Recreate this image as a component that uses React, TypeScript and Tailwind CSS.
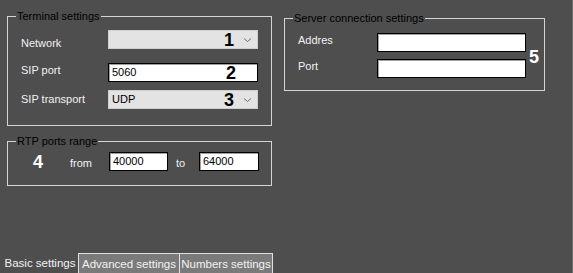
import React from "react";

const font = "font-['Liberation_Sans',Arial,sans-serif]";

const Chevron = () => (
  <svg width="9" height="6" viewBox="0 0 9 6" className="shrink-0">
    <path d="M1 1.5 L4.5 4.5 L8 1.5" fill="none" stroke="#6e6e6e" strokeWidth="1" />
  </svg>
);

type ComboProps = { value?: string; mark: string };

const Combo = ({ value, mark }: ComboProps) => (
  <div className="flex h-[19px] w-[150px] items-center border border-[#cfcfcf] bg-[#e3e3e3] pl-[3px] pr-[5px]">
    <span className="flex-1 text-[11px] text-black">{value}</span>
    <span className="mr-[9px] text-[18px] font-bold leading-none text-black">{mark}</span>
    <Chevron />
  </div>
);

const GroupBox = ({
  title,
  className,
  legendClass,
  children,
}: {
  title: string;
  className?: string;
  legendClass: string;
  children: React.ReactNode;
}) => (
  <fieldset className={`min-w-0 border border-[#d4d4d4] ${className ?? ""}`}>
    <legend className={`px-[1px] text-[11px] leading-[13px] text-black ${legendClass}`}>{title}</legend>
    {children}
  </fieldset>
);

const TextBox = ({ value, w, children }: { value?: string; w: string; children?: React.ReactNode }) => (
  <div className={`flex h-[19px] shrink-0 ${w} items-center border border-black bg-white pl-[3px] shadow-[inset_1px_1px_0_#a0a0a0]`}>
    <span className="flex-1 text-[11px] text-black">{value}</span>
    {children}
  </div>
);

export default function App() {
  return (
    <div className={`${font} flex h-[273px] w-[573px] flex-col border-r border-[#6c6c6c] bg-[#4e4e4e] text-[11px] text-[#f2f2f2]`}>
      {/* Settings area */}
      <div className="flex flex-1 gap-[12px] pl-[7px] pt-[10px]">
        {/* Left column */}
        <div className="flex w-[265px] flex-col gap-[9px]">
          <GroupBox title="Terminal settings" className="h-[116px] px-[13px]" legendClass="ml-[-5px]">
            <div className="mt-[7px] flex h-[19px] items-center justify-between">
              <span className="pt-[8px]">Network</span>
              <Combo mark="1" />
            </div>
            <div className="mt-[14px] flex h-[19px] items-center justify-between">
              <span className="pb-[4px]">SIP port</span>
              <TextBox value="5060" w="w-[150px]">
                <span className="mr-[21px] text-[18px] font-bold leading-none text-black">2</span>
              </TextBox>
            </div>
            <div className="mt-[8px] flex h-[19px] items-center justify-between">
              <span>SIP transport</span>
              <Combo value="UDP" mark="3" />
            </div>
          </GroupBox>
          <GroupBox title="RTP ports range" className="h-[51px] w-[265px] pl-[25px]" legendClass="ml-[-17px]">
            <div className="mt-[4px] flex h-[19px] items-center">
              <span className="w-[37px] shrink-0 text-[18px] font-bold leading-none text-white">4</span>
              <span className="w-[39px] shrink-0 pt-[3px]">from</span>
              <TextBox value="40000" w="w-[59px]" />
              <span className="w-[31px] shrink-0 pl-[8px] pt-[3px]">to</span>
              <TextBox value="64000" w="w-[60px]" />
            </div>
          </GroupBox>
        </div>

        {/* Right column */}
        <div className="pt-[2px]">
          <GroupBox title="Server connection settings" className="h-[79px] w-[261px] pl-[13px] pr-[6px]" legendClass="ml-[-5px]">
            <div className="flex items-center">
              <div className="flex flex-col">
                <div className="mt-[8px] flex h-[19px] items-center">
                  <span className="w-[79px] pb-[4px]">Addres</span>
                  <TextBox w="w-[149px]" />
                </div>
                <div className="mt-[7px] flex h-[19px] items-center">
                  <span className="w-[79px] pb-[4px]">Port</span>
                  <TextBox w="w-[149px]" />
                </div>
              </div>
              <span className="ml-[3px] mt-[10px] text-[18px] font-bold leading-none text-white">5</span>
            </div>
          </GroupBox>
        </div>
      </div>

      {/* Tabs */}
      <div className="flex h-[20px] items-end pl-[2px]">
        <div className="flex h-[20px] w-[76px] items-center justify-center pt-[2px] text-[11.5px]">Basic settings</div>
        <div className="flex h-[20px] w-[101px] items-center justify-center border-l border-t border-[#e0e0e0] bg-[#7a7a7a] pt-[2px] text-[11.5px]">
          Advanced settings
        </div>
        <div className="flex h-[20px] w-[94px] items-center justify-center border-x border-t border-[#e0e0e0] bg-[#7a7a7a] pt-[2px] text-[11.5px]">
          Numbers settings
        </div>
      </div>
    </div>
  );
}
